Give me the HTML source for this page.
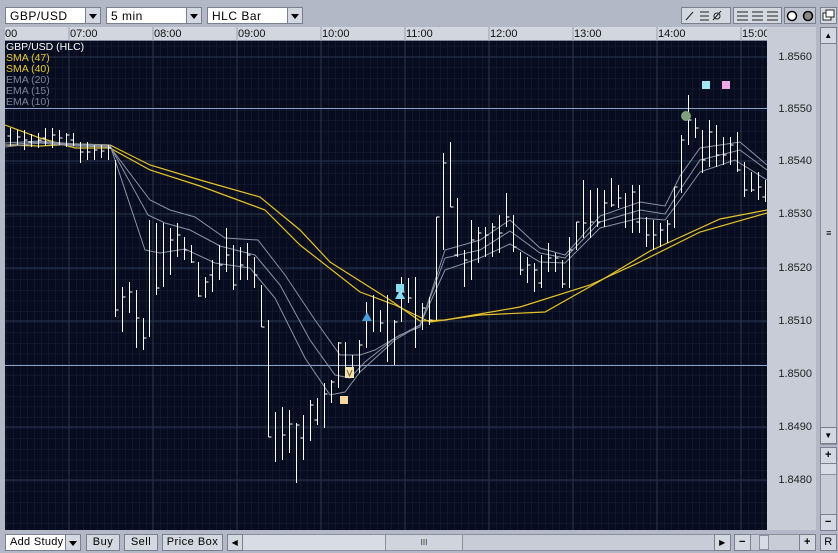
<!DOCTYPE html>
<html><head><meta charset="utf-8"><style>
*{margin:0;padding:0;box-sizing:border-box}
body{width:838px;height:553px;background:#b2b8c6;font-family:"Liberation Sans",sans-serif;font-size:11px;position:relative;overflow:hidden}
.a{position:absolute}
.dd{position:absolute;top:7px;height:17px;background:#fff;border:1px solid #7a8090;font-size:12px;padding:1px 0 0 4px;letter-spacing:.5px;white-space:nowrap}
.dd b{position:absolute;right:0;top:0;width:15px;height:15px;background:#d4d8e0;border-left:1px solid #7a8090}
.dd b:after{content:"";position:absolute;left:3px;top:6px;border:4px solid transparent;border-top:5px solid #000;border-bottom:0}
.btn{position:absolute;background:#d4d8e0;border:1px solid #7a8090;font-size:11px;text-align:center;line-height:15px;height:17px;letter-spacing:.5px;white-space:nowrap}
.pl{position:absolute;left:770px;width:42px;text-align:right;font-size:11px;color:#222}
.tl{position:absolute;top:28px;font-size:11px;color:#111}
</style></head><body>
<div class="dd" style="left:5px;width:96px">GBP/USD<b></b></div>
<div class="dd" style="left:106px;width:96px">5 min<b></b></div>
<div class="dd" style="left:207px;width:96px">HLC Bar<b></b></div>
<div class="btn" style="left:681px;top:7px;width:50px"></div>
<div class="btn" style="left:733px;top:7px;width:49px"></div>
<div class="btn" style="left:784px;top:7px;width:32px;background:#bfc4ce"></div>
<div class="btn" style="left:820px;top:7px;width:17px"></div>
<svg class="a" style="left:0;top:0" width="838" height="27">
<g stroke="#222" fill="none"><path d="M686 20L693 12M700 12h9M700 16h9M700 20h9M713 20L721 11"/><circle cx="717" cy="16" r="3"/>
<path d="M737 12h11M737 16h11M737 20h11M752 12h11M752 16h11M752 20h11M767 12h11M767 16h11M767 20h11"/>
<circle cx="792" cy="16" r="4.5" fill="#fff" stroke="#000" stroke-width="1.5"/><circle cx="808" cy="16" r="4.5" fill="#888" stroke="#000" stroke-width="1.5"/>
<rect x="823" y="13" width="8" height="7" fill="#fff"/><rect x="826" y="10" width="8" height="7" fill="#fff"/></g></svg>
<div class="a" style="left:5px;top:27px;width:762px;height:14px;background:#d2d6de;border-bottom:1px solid #8088a0"></div>
<div class="tl" style="left:5px">00</div>
<div class="tl" style="left:70px">07:00</div><div class="tl" style="left:154px">08:00</div><div class="tl" style="left:238px">09:00</div><div class="tl" style="left:322px">10:00</div><div class="tl" style="left:406px">11:00</div><div class="tl" style="left:490px">12:00</div><div class="tl" style="left:574px">13:00</div><div class="tl" style="left:658px">14:00</div><div class="tl" style="left:742px;width:25px;overflow:hidden">15:00</div>
<svg class="a" style="left:0;top:27px" width="838" height="14"><path d="M69 0v14M153 0v14M237 0v14M321 0v14M405 0v14M489 0v14M573 0v14M657 0v14M741 0v14" stroke="#9aa0b0"/></svg>
<div class="a" style="left:767px;top:27px;width:49px;height:503px;background:#c8ccd6"></div>
<div class="pl" style="top:51px">1.8560</div><div class="pl" style="top:103px">1.8550</div><div class="pl" style="top:155px">1.8540</div><div class="pl" style="top:208px">1.8530</div><div class="pl" style="top:262px">1.8520</div><div class="pl" style="top:315px">1.8510</div><div class="pl" style="top:368px">1.8500</div><div class="pl" style="top:421px">1.8490</div><div class="pl" style="top:474px">1.8480</div>
<svg class="a" style="left:5px;top:41px" width="762" height="489" viewBox="5 41 762 489">
<defs><pattern id="mg" width="7" height="10.6" patternUnits="userSpaceOnUse" x="6" y="46.3"><path d="M0 0v10.6M0 0h7" stroke="#18213a" stroke-width="1"/></pattern></defs>
<rect x="5" y="41" width="762" height="489" fill="#070d1e"/>
<rect x="5" y="41" width="762" height="489" fill="url(#mg)"/>
<g stroke="#2e3750"><path d="M69 41v489M153 41v489M237 41v489M321 41v489M405 41v489M489 41v489M573 41v489M657 41v489M741 41v489M5 57h762M5 161h762M5 214h762M5 268h762M5 321h762M5 427h762M5 480h762"/></g>
<path d="M5 108.5h762M5 365.5h762" stroke="#8ea0c8"/>
<g fill="none" stroke="#e6c22a" stroke-width="1.2">
<polyline points="5,125 40,138 75,148 110,148 150,170 200,186 265,210 300,245 360,292 395,305 430,322 480,315 545,312 600,281 650,251 720,219 767,210"/>
<polyline points="5,145 40,146 75,144 110,145 150,165 200,180 260,197 300,230 330,262 390,300 420,321 445,320 520,307 590,285 640,262 700,232 767,213"/>
</g>
<g fill="none" stroke="#8a92a6" stroke-width="1">
<polyline points="5,143 40,141 75,144 110,145 145,250 160,253 185,249 215,263 250,268 275,298 305,358 330,395 345,392 360,372 395,340 420,325 445,270 480,258 510,244 540,262 565,263 600,228 640,218 665,220 680,200 700,172 735,160 767,180"/>
<polyline points="5,145 40,142 75,145 110,146 148,215 165,223 190,230 220,246 255,255 280,285 310,340 335,375 350,378 365,362 395,338 420,325 445,258 480,250 510,231 540,253 565,258 600,222 640,210 665,214 680,190 700,160 740,150 767,170"/>
<polyline points="5,147 40,143 75,146 110,147 150,200 170,210 195,217 225,238 258,240 285,275 315,320 340,355 360,355 375,350 400,335 420,327 445,250 480,240 510,220 540,248 565,255 600,216 640,202 665,206 680,176 700,148 740,142 767,165"/>
</g>
<path transform="translate(0.5,0)" stroke="#fff" stroke-width="1" fill="none" d="
M10 128V146M10 136h-3M17 130V145M17 137h3M24 130V150M24 140h3M31 134V147M31 142h-3M38 133V148M38 140h3M45 128V146M45 138h-3M52 128V148M52 135h3M59 130V145M59 138h3M66 133V147M66 135h3M73 133V146M73 140h-3
M80 142V163M80 152h3M87 142V160M87 152h3M94 145V160M94 150h3M101 145V158M101 151h3M108 145V160M108 148h3
M115 160V317M115 310h3M122 287V332M122 297h3M129 282V313M129 292h3M136 290V348M136 318h3M143 318V350M143 338h3
M149 220V337M156 223V295M156 288h3M163 223V287M170 228V275M170 240h3M177 223V257M177 235h3M184 237V260M184 250h3M191 245V263M191 262h3M198 262V297M198 296h3M205 277V298M205 282h3M212 260V292M212 275h-3M219 245V280M219 265h3M226 228V272M226 255h3M233 245V290M233 285h3M240 247V280M240 265h3M247 243V280M247 255h3M254 257V288M254 275h3
M261 285V327M261 327h3M268 320V437M268 437h3M275 412V462M282 407V460M282 435h3M289 410V453M289 424h3M296 423V483M296 425h3M303 415V460M303 438h-3M310 400V441M310 405h3M317 398V425M317 420h-3M324 383V428M324 394h3M331 380V403M331 382h3M338 342V388M338 343h3M345 342V373M352 355V373M359 340V373M359 345h3
M366 302V348M373 295V332M380 310V332M380 323h3M387 295V362M394 320V365M394 322h3M401 277V322M401 292h3M408 278V303M408 298h3M415 277V348M422 303V330M422 308h3M429 297V325M429 320h3
M436 217V320M436 217h3M443 153V250M443 163h3M450 142V207M450 207h3M457 198V257M457 255h-3M464 250V287M464 260h3M471 220V280M471 240h3M478 227V263M478 233h3M485 227V257M485 235h3M492 223V257M492 227h3M499 215V253M499 233h3M506 193V227M506 217h3M513 215V252M513 247h3M520 252V275M520 270h3M527 257V283M527 265h3M534 263V292M534 270h3M541 255V288M541 283h-3M548 243V272M548 258h3M555 253V272M555 258h3M562 260V288M562 284h3M569 237V288M569 250h3M576 222V250M576 222h3M583 180V238M583 223h3M590 190V238M590 222h3M597 188V227M597 222h3M604 190V227M604 203h3M611 178V207M611 205h3M618 185V208M618 198h3M625 193V228M632 185V233M632 192h3M639 185V233M639 222h-3
M646 217V247M646 235h3M653 220V250M653 235h3M660 223V247M660 230h3M667 220V243M667 224h3M674 187V228M674 187h3M681 135V193M681 140h3M688 95V145M688 120h3M695 118V138M695 128h3M702 130V173M702 160h3M709 120V167M709 132h3M716 125V167M716 155h3M723 137V165M723 155h3M730 137V165M730 145h3M737 132V172M737 170h3M744 162V197M744 190h3M751 172V192M751 190h3M758 172V200M758 187h3M765 180V202M765 197h-3"/>
<circle cx="686" cy="116" r="5" fill="#7fa07a"/>
<rect x="702" y="81" width="8" height="8" fill="#9ee6f4"/><rect x="722" y="81" width="8" height="8" fill="#f2a8e8"/>
<rect x="340" y="396" width="8" height="8" fill="#f8d8a0"/>
<rect x="345" y="367" width="9" height="11" fill="#f4e4b0"/><path d="M347 370l2.5 6 2.5-6" stroke="#806030" fill="none"/>
<path d="M362 321l5-9 5 9z" fill="#4a9cdc"/>
<rect x="396" y="284" width="8" height="8" fill="#88dcf0"/><path d="M395 299l5-9 5 9z" fill="#88dcf0"/>
<text x="6" y="50" fill="#fff" font-size="10.5" font-family="Liberation Sans">GBP/USD (HLC)</text>
<text x="6" y="61" fill="#e8c830" font-size="10.5" font-family="Liberation Sans">SMA (47)</text>
<text x="6" y="72" fill="#e8c830" font-size="10.5" font-family="Liberation Sans">SMA (40)</text>
<text x="6" y="83" fill="#7c8496" font-size="10.5" font-family="Liberation Sans">EMA (20)</text>
<text x="6" y="94" fill="#7c8496" font-size="10.5" font-family="Liberation Sans">EMA (15)</text>
<text x="6" y="105" fill="#7c8496" font-size="10.5" font-family="Liberation Sans">EMA (10)</text>
</svg>
<div class="a" style="left:820px;top:27px;width:17px;height:418px;background:#c8ccd6;border:1px solid #8a90a0"></div>
<div class="btn" style="left:820px;top:27px;width:17px;height:17px;line-height:15px;font-size:8px">▲</div>
<div class="btn" style="left:820px;top:427px;width:17px;height:17px;line-height:15px;font-size:8px">▼</div>
<div class="btn" style="left:826px;top:229px;width:6px;height:9px;border:none;background:none;font-size:9px;line-height:9px">≡</div>
<div class="a" style="left:820px;top:447px;width:17px;height:84px;background:#c8ccd6;border:1px solid #8a90a0"></div>
<div class="btn" style="left:820px;top:447px;width:17px;font-weight:bold">+</div>
<div class="a" style="left:821px;top:464px;width:15px;height:11px;background:#d8dce4;border-bottom:1px solid #8a90a0"></div>
<div class="btn" style="left:820px;top:514px;width:17px;font-weight:bold">−</div>
<div class="btn" style="left:820px;top:534px;width:17px">R</div>
<div class="a" style="left:5px;top:534px;width:61px;height:17px;background:#fff;border:1px solid #7a8090;font-size:11px;padding:1px 0 0 4px;letter-spacing:.3px;white-space:nowrap">Add Study</div>
<div class="dd" style="left:65px;top:534px;width:16px;padding:0"><b></b></div>
<div class="btn" style="left:86px;top:534px;width:34px">Buy</div>
<div class="btn" style="left:124px;top:534px;width:34px">Sell</div>
<div class="btn" style="left:162px;top:534px;width:61px">Price Box</div>
<div class="a" style="left:227px;top:534px;width:504px;height:17px;background:#c8ccd6;border:1px solid #8a90a0"></div>
<div class="a" style="left:243px;top:535px;width:142px;height:15px;background:#d8dce4"></div>
<div class="a" style="left:385px;top:535px;width:78px;height:15px;background:#d0d4dc;border-left:1px solid #8a90a0;border-right:1px solid #8a90a0;text-align:center;font-size:8px;line-height:15px;color:#333">III</div>
<div class="btn" style="left:227px;top:534px;width:16px;font-size:8px">◀</div>
<div class="btn" style="left:714px;top:534px;width:17px;font-size:8px">▶</div>
<div class="a" style="left:734px;top:534px;width:81px;height:17px;background:#c8ccd6;border:1px solid #8a90a0"></div>
<div class="btn" style="left:734px;top:534px;width:17px;font-weight:bold">−</div>
<div class="a" style="left:759px;top:535px;width:10px;height:15px;background:#d8dce4;border:1px solid #8a90a0"></div>
<div class="btn" style="left:799px;top:534px;width:17px;font-weight:bold">+</div>
</body></html>
